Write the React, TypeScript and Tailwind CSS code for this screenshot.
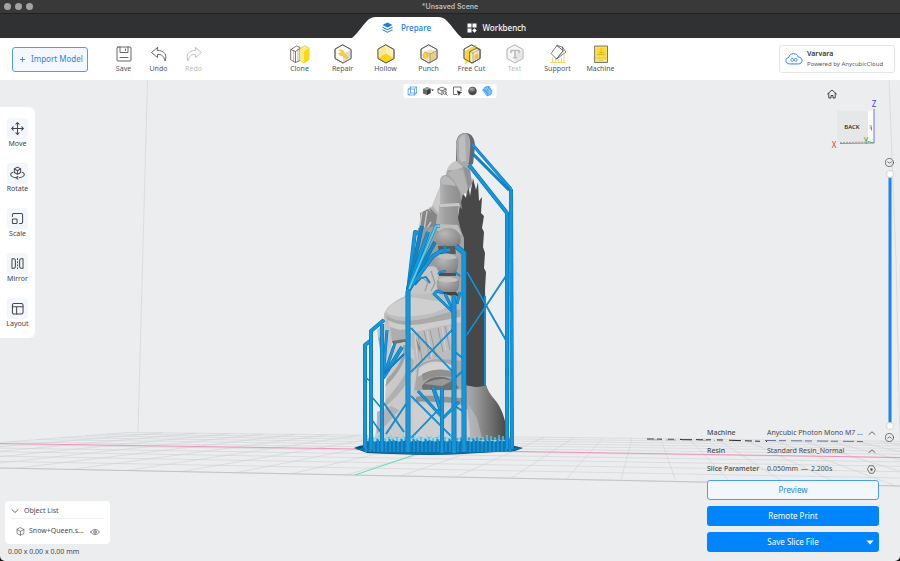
import { useState, type ReactNode } from "react";

type Point = [number, number];

const HEX = "M10 1 18 5.5v9L10 19l-8-4.5v-9z";

function Icon({ children, className = "size-5", box = 20 }: { children: ReactNode; className?: string; box?: number }) {
  return (
    <svg
      viewBox={`0 0 ${box} ${box}`}
      className={className}
      fill="none"
      stroke="currentColor"
      strokeLinecap="round"
      strokeLinejoin="round"
      aria-hidden="true"
    >
      {children}
    </svg>
  );
}

/* ---------- Toolbar ---------- */

const fileTools = [
  {
    label: "Save",
    icon: (
      <g strokeWidth="0.9">
        <rect x="3" y="3" width="14" height="14" rx="1" />
        <path d="M6 3v5.5h8V3M11.5 5v1.5M6 13.5h8" />
      </g>
    ),
  },
  {
    label: "Undo",
    icon: <path strokeWidth="0.9" d="M8.500 3.500 2.500 8.500l6 5v-3c4-.5 6.500 1.500 7.500 6.500 2.500-6-.5-10.500-7.500-10.700z" />,
  },
  {
    label: "Redo",
    disabled: true,
    icon: <path strokeWidth="0.9" d="m11.500 3.500 6 5-6 5v-3c-4-.5-6.500 1.500-7.500 6.500-2.500-6 .5-10.500 7.500-10.700z" />,
  },
];

const modelTools = [
  {
    label: "Clone",
    icon: (
      <g strokeWidth="0.8">
        <path d="M1 5.500 6.500 2l3.500 1.500v13L5.500 18.500 1 16zM1 5.500l4.500 2v11M5.500 7.500 10 4.500" fill="#fff" />
        <path d="M8 4.500v12M3.500 7v10" strokeWidth="0.4" />
        <path d="m10 5 4.500-3.500L19 4v11.500L14 19l-4-2.500z" fill="#fdeb8a" stroke="#e8c92e" />
        <path d="M14 7.500 19 4v11.500L14 19z" fill="#fbd815" stroke="none" />
      </g>
    ),
  },
  {
    label: "Repair",
    icon: (
      <g strokeWidth="0.8">
        <path d={HEX} fill="#fafafa" />
        <path d="M10 10 18 5.500v9L10 19z" fill="#dedede" stroke="none" />
        <path d={HEX} />
        <path
          d="M6.500 6.200 8.500 8 8 9.500l-2.200-.4c.2 2.200 2 3.200 3.700 2.400l3.400 3c1.500.6 2.500-.8 1.800-2l-3.500-3C11.500 7.300 9 5 6.500 6.200z"
          fill="#fbd529"
          stroke="#d9b220"
          strokeWidth="0.5"
        />
      </g>
    ),
  },
  {
    label: "Hollow",
    icon: (
      <g strokeWidth="0.8">
        <path d={HEX} fill="#fdf0b0" />
        <path d="M10 1v9l-8 4.500v-9z" fill="#fbe88f" stroke="none" />
        <path d="m10 10 7 4.200-7 4-7-4z" fill="#fbd40f" stroke="#e8c010" strokeWidth="0.4" />
        <path d={HEX} />
      </g>
    ),
  },
  {
    label: "Punch",
    icon: (
      <g strokeWidth="0.8">
        <path d={HEX} fill="#fff" />
        <path d="M5 8 11.500 5l6 2v8L11 18.500 5 15z" fill="#f6e3b4" stroke="none" />
        <path d="m11 10 6.500-3v7.500l-6.500 4z" fill="#e9cc90" stroke="none" />
        <path d={HEX} />
        <path d="m5 8 6 2v8.500M11 10l6.500-3" strokeWidth="0.4" />
        <circle cx="6.500" cy="11.500" r="2.700" fill="#fbd529" stroke="#d9b220" strokeWidth="0.5" />
      </g>
    ),
  },
  {
    label: "Free Cut",
    icon: (
      <g strokeWidth="0.8">
        <path d={HEX} fill="#fff" />
        <path d="M3.500 7 14 1v12.500l-10.500 6z" fill="#fbd529" stroke="#e8c92e" strokeWidth="0.5" />
        <path d="m8 7.500 6-3 4 1v9L10 19l-2-1z" fill="#fbeab0" />
        <path d="m8 7.500 3 1.500v9.500M11 9l7-3.500" strokeWidth="0.4" />
        <path d="M12.500 11 16.500 9v5l-4 2.200z" fill="#e2c268" stroke="none" />
        <path d={HEX} />
      </g>
    ),
  },
  {
    label: "Text",
    disabled: true,
    icon: (
      <g strokeWidth="0.8">
        <path d={HEX} fill="#f7f7f7" />
        <path d="M10 10 18 5.500v9L10 19z" fill="#e6e6e6" stroke="none" />
        <path d="M6 8.500v-2h8v2M10 6.500v7M8.700 13.800h2.600" strokeWidth="1.600" />
        <path d={HEX} />
      </g>
    ),
  },
  {
    label: "Support",
    icon: (
      <g strokeWidth="0.8">
        <path
          d="M4.500 14v4M7.500 15v3M10.500 15.500V18M13.500 14v4M16 11v7M3 18.500h14"
          stroke="#f3c93c"
          strokeDasharray="1.500 .7"
        />
        <path d="M9 1.500 3 9.500l5.500 5.500L15 7z" fill="#fff" />
        <path d="m9 1.500 5.500 1.700L18 8l-9.500 7L15 7zM15 7l-.5-3.800" fill="#fff" />
      </g>
    ),
  },
  {
    label: "Machine",
    icon: (
      <g strokeWidth="0.8">
        <rect x="4" y="2" width="12.500" height="16.500" fill="#fbe46c" />
        <path d="M5.500 3.500h9.500v9H5.500z" fill="#fbd932" stroke="none" />
        <path
          d="M10.200 4.500v6M6.500 10.500h7.500M8.500 8.500h3.500M4 14h12.500M8.500 16.300h3.500"
          stroke="#c09c22"
          strokeWidth="0.5"
        />
      </g>
    ),
  },
];

interface ToolButtonProps {
  label: string;
  icon: ReactNode;
  disabled?: boolean;
  className: string;
}

function ToolButton({ label, icon, disabled, className }: ToolButtonProps) {
  return (
    <button
      type="button"
      disabled={disabled}
      className={`flex flex-col items-center text-[7px] leading-[10px] text-[#555] disabled:text-[#bbb] ${className}`}
    >
      <Icon>{icon}</Icon>
      <span className="whitespace-nowrap">{label}</span>
    </button>
  );
}

function Toolbar() {
  return (
    <header className="relative grid h-[42px] shrink-0 grid-cols-[1fr_auto_1fr] items-center bg-white px-3">
      <div className="flex items-center">
        <button
          type="button"
          className="flex h-[25px] w-[76px] items-center gap-[5px] rounded-[3px] border border-[#4a9df5] bg-[#f4f8fe] pl-[6px] text-[8px] whitespace-nowrap text-[#2a83e6]"
        >
          <Icon box={8} className="size-[7px] shrink-0">
            <path d="M4 1.500v5M1.500 4h5" />
          </Icon>
          Import Model
        </button>
        <div className="ml-[18px] flex">
          {fileTools.map((tool) => (
            <ToolButton key={tool.label} {...tool} className="w-[35px]" />
          ))}
        </div>
      </div>

      <div className="flex">
        {modelTools.map((tool) => (
          <ToolButton key={tool.label} {...tool} className="w-[43px]" />
        ))}
      </div>

      <a
        href="#account"
        className="-mr-[7px] flex h-7 w-[116px] items-center gap-1 justify-self-end rounded-[3px] border border-[#e4e5e8] bg-white pl-[5px]"
      >
        <Icon className="size-[18px] shrink-0 text-[#2b87f3]">
          <path
            d="M5.500 15.500C2.500 15.500 1 13.800 1 11.800 1 9.900 2.400 8.500 4.200 8.300 4.600 5.500 6.800 4 9.500 4c2.600 0 4.600 1.500 5.200 3.800 2.500.1 4.300 1.600 4.300 3.900 0 2.200-1.700 3.800-4.200 3.800z"
            strokeWidth="1.100"
          />
          <path
            d="M8 9.200c-2 0-2 3.600 0 3.600s2-3.600 4-3.600 2 3.600 0 3.600-2-3.600-4-3.600z"
            strokeWidth="0.9"
          />
        </Icon>
        <span className="flex flex-col leading-[10px] whitespace-nowrap text-[#555]">
          <strong className="text-[7px] font-semibold text-[#333]">Varvara</strong>
          <span className="text-[6px]">Powered by AnycubicCloud</span>
        </span>
      </a>
    </header>
  );
}

/* ---------- Tabs ---------- */

function Tabs() {
  return (
    <nav className="flex h-[25px] shrink-0 items-stretch justify-center border-t border-[#222] bg-[#303133] text-[8px] font-medium">
      <button type="button" className="relative flex w-[110px] items-center justify-center gap-2 text-[#1b7be8]">
        <svg viewBox="0 0 110 24" preserveAspectRatio="none" className="absolute inset-0 size-full" aria-hidden="true">
          <path d="M0 24C6 19 10 12 15 7c3-3 5-4 9-4h62c4 0 6 1 9 4 5 5 9 12 15 17z" fill="#fff" />
        </svg>
        <svg viewBox="0 0 12 12" className="relative mt-[3px] size-[11px]" fill="currentColor" aria-hidden="true">
          <path d="m6 .5 5.500 2.700L6 6 .5 3.200z" />
          <path d="m.5 5 5.500 2.800L11.500 5v1.300L6 9 .5 6.300zM.5 7.800 6 10.500l5.500-2.700V9L6 11.800.5 9z" />
        </svg>
        <span className="relative mt-[3px]">Prepare</span>
      </button>
      <button type="button" className="flex w-[87px] items-center gap-[6px] pt-[3px] pl-[5px] text-white">
        <svg viewBox="0 0 10 10" className="size-[10px]" fill="currentColor" aria-hidden="true">
          <path d="M.5.500h4v4h-4zM5.500.500h4v4h-4zM.5 5.500h4v4h-4zM7.500 5.200 9.800 7.500 7.500 9.800 5.200 7.500z" />
        </svg>
        Workbench
      </button>
    </nav>
  );
}

/* ---------- Build plate ---------- */

// All depth lines of the plate meet in this point.
const VANISH: Point = [644, 392];

function crossing(frontX: number, base: number, slope: number): Point {
  const frontY = 468 + 0.02 * frontX;
  const dx = frontX - VANISH[0];
  const dy = frontY - VANISH[1];
  const t = (base + slope * VANISH[0] - VANISH[1]) / (dy - slope * dx);
  return [VANISH[0] + dx * t, VANISH[1] + dy * t];
}

function BuildPlate() {
  const depth = Array.from({ length: 34 }, (_, i) => -259 + i * 55);
  const rows = [0, 0.05, 0.1, 0.16, 0.22, 0.29, 0.37, 0.46, 0.56, 0.68, 0.82, 1];

  return (
    <g fill="none">
      <path d="M147.500 80 138 432M889 80l7 180 4 180" stroke="#d6d8da" strokeWidth="0.8" />
      <g stroke="#cfd1d3" strokeWidth="0.6">
        {depth.map((x) => {
          const [bx, by] = crossing(x, 431, 0.0115);
          return <line key={x} x1={bx} y1={by} x2={x} y2={468 + 0.02 * x} />;
        })}
        {rows.map((r) => {
          const base = 431 + 37 * r;
          const slope = 0.0115 + 0.0085 * r;
          const [x, y] = crossing(-259, base, slope);
          return <line key={r} x1={x} y1={y} x2="1400" y2={base + slope * 1400} />;
        })}
      </g>
      <path d="M-200 464 900 486l500 10" stroke="#bfc1c3" strokeWidth="0.9" />
      <path d="M-200 440 0 443.500l360 5.500 540 8.500 500 8" stroke="#f07fb0" strokeWidth="0.8" />
      <path d="m355 475 62-21" stroke="#54dcae" strokeWidth="0.9" />
      <path d="m647 439 75 1 45 1.500" stroke="#2c2d30" strokeWidth="1" strokeDasharray="7 3 5 6 6 6 12 4" />
      <path d="m650 439.700 65 .8" stroke="#9a9b9e" strokeWidth="0.8" strokeDasharray="10 6" />
      <path d="m765 440.500 98 1" stroke="#53648a" strokeWidth="0.9" strokeDasharray="11 3 7 5" />
    </g>
  );
}

/* ---------- Sliced model ---------- */

function Figure() {
  return (
    <g>
      <defs>
        <linearGradient id="cape" x1="0" y1="0" x2="1" y2="0">
          <stop offset="0" stopColor="#c4c4c4" />
          <stop offset="0.4" stopColor="#a0a0a0" />
          <stop offset="0.75" stopColor="#6c6c6c" />
          <stop offset="1" stopColor="#454545" />
        </linearGradient>
        <linearGradient id="cloth" x1="0" y1="0" x2="1" y2="0.2">
          <stop offset="0" stopColor="#d3d3d3" />
          <stop offset="0.6" stopColor="#c2c2c2" />
          <stop offset="1" stopColor="#a2a2a2" />
        </linearGradient>
        <linearGradient id="arm" x1="0" y1="0" x2="1" y2="0">
          <stop offset="0" stopColor="#b4b4b4" />
          <stop offset="0.3" stopColor="#a0a0a0" />
          <stop offset="1" stopColor="#8b8b8b" />
        </linearGradient>
        <radialGradient id="fist" cx="0.35" cy="0.3" r="0.8">
          <stop offset="0" stopColor="#b8b8b8" />
          <stop offset="1" stopColor="#808080" />
        </radialGradient>
      </defs>

      {/* hair and cape seen edge on */}
      <path
        d="M462 192 466 198 468 184 470 196 473 178 476 190 478 182 479 201 482 197 481 213 484 216 482 228 484 232 483 247 485 253 484 268 486 272 485 290 486 320 486 385 490 400H455V235z"
        fill="#484848"
      />
      <path d="M463 384C472 387 480 386 486 385 489 394 494 398 498 404 503 412 505 420 507 430L507 440H450z" fill="url(#cape)" />
      <path d="M464 340h22v45c-7 3-14 2-20 0z" fill="#484848" />

      {/* ring */}
      <path d="M456 146c0-8 3-13 9-13 7 0 10 6 10 14l-2 17-12 5-5-6z" fill="#686868" />
      <path d="M456 146c0-8 3-12 9-13 5 1 6 8 5 17l-1 13-6 3-6-3z" fill="#a9a9a9" />
      <path d="M459 140c1-3 3-5 6-5l1 26-5 1-2-4z" fill="#bebebe" />

      {/* head and shoulder */}
      <path d="M446 175c1-8 6-13 11-14l12 3 3 18-2 8-2-6-1 12-3-6-3 12-9-12-7-10z" fill="#a8a8a8" />
      <path d="M447 170c2-5 5-8 9-9l7 6-7 3z" fill="#c6c6c6" />
      <path d="m456 169 7 2 5 19-5 5-9-14-6-8z" fill="#b4b4b4" />
      <path d="m463 166 7 4 2 14-4 4z" fill="#939393" />

      {/* torso */}
      <path
        d="m441 184-9 22-6 5-6 12-4 20-6 40-6 14c-10 4-17 12-20 17l4 12 5 16 5 28-10 38-10 22-3 8H464V238l-18-45z"
        fill="url(#cloth)"
      />
      <path d="m440 187-8 20 8 9 3-20z" fill="#cbcbcb" />
      <path d="m429 211 4-5 7 10 1 10-12 2-6 2z" fill="#b1b1b1" />
      <path d="m420 213 8-4 3 4-2-6 8 8-1 9 5 5-20 2z" fill="#858585" />
      <path d="m422 212-3 18M427 211l-3 19M431 222l-6 9" stroke="#c9c9c9" strokeWidth="1.400" fill="none" />
      <path d="M418 228 440 226 438 270 412 290z" fill="#9b9b9b" />
      <path d="M410 284c10-18 20-20 28-16v24l-26 6z" fill="#c6c6c6" />
      <path d="m420 276 8 6-3 9M431 271l4 12-4 8" stroke="#9c9c9c" strokeWidth="1.200" fill="none" />

      {/* arm */}
      <path d="M440 181c0-4 3-6 6-6 7 3 11 11 14 18l2 16-3-3-19-2z" fill="url(#arm)" />
      <path d="M441 181c1-3 2-5 5-5 5 2 8 6 10 10l-15-2z" fill="#b9b9b9" />
      <path d="m439 204 20-1-1 15 4 17-9-5-15-4z" fill="url(#arm)" />
      <path d="m439 204 20-1 1 3-20 1z" fill="#c8c8c8" />
      <path d="m438 224 20 1 4 10-8-3-17-1z" fill="#bdbdbd" />
      <path d="M436 236c2-10 20-11 24-1 2 6 0 12-5 12h-13c-4-1-7-5-6-11z" fill="url(#fist)" />
      <path d="M438 246h17l1 8h-17z" fill="#5a5a5a" />
      <path d="M435 259c1-7 20-8 23 0 1 8-1 15-5 15l-12-1c-4-2-6-7-6-14z" fill="url(#fist)" />
      <path d="M437 257c4-4 16-5 20 1-4 2-14 2-20-1z" fill="#bfbfbf" />
      <path d="M439 273h17v3h-17z" fill="#505050" />
      <path d="M437 281c2-6 19-6 22 0 1 6-2 12-6 12h-11c-4-1-6-6-5-12z" fill="url(#fist)" />
      <path d="M438 280c3-4 17-4 20 0-3 3-16 3-20 0z" fill="#c4c4c4" />
      <path d="M441 292h15l4 4h-19z" fill="#444" />

      {/* lap and knee */}
      <path d="M384 315c2-9 13-16 24-20l32-2 21 5v27l-40 10-14 6-15 2c-2-10-9-18-8-28z" fill="#bebebe" />
      <path d="M386 312c4-8 13-13 24-15l20 3 25 4-22 9c-18 4-40 6-47-1z" fill="#cfcfcf" />
      <path d="M386 315c10 9 30 6 46 2l28-8v8l-26 6c-22 5-38 6-46 0z" fill="#a9a9a9" />
      <path d="M388 320c10 6 26 6 40 3l33-6v10l-34 7-20 3-4 4h-11z" fill="#cdcdcd" />
      <path d="m390 327 10 3 6-1-1 10-13 3z" fill="#aeaeae" />
      <path d="m392 341 13-2 1 3-13 2z" fill="#6f6f6f" />
      <path d="M408 334 428 329 461 322V374l-48-2z" fill="#bcbcbc" />
      <path
        d="m418 334 4 26M424 331l6 28M430 330l6 27M438 328l5 24M445 326l5 24M452 325l4 22"
        stroke="#9d9d9d"
        strokeWidth="1"
        fill="none"
      />
      <path d="m415 335 3 30M427 331l5 27M442 327l4 24M449 326l4 23" stroke="#d2d2d2" strokeWidth="1" fill="none" />
      <path d="M377 330 386 322 392 343 388 370 384 378z" fill="#c4c4c4" />
      <path d="m378 336 6 36 2-26z" fill="#9a9a9a" />

      {/* skirt folds */}
      <path d="M388 348 404 342 414 350 416 376 412 402 384 420z" fill="#c9c9c9" />
      <path d="M403 345c2 10-4 22-16 34l-2 8c12-12 22-26 22-42z" fill="#a2a2a2" />
      <path d="M410 356c0 14-10 28-24 44l-1 7c16-14 28-28 29-46z" fill="#b0b0b0" />
      <path d="M416 338 420 348 415 374 419 352z" fill="#7d7d7d" />
      <path d="M418 366c10-8 24-8 44-5v28l-48 4z" fill="#a6a6a6" />
      <path d="M419 368c12-10 26-7 36-1l-1 4c-12-3-24-2-36 6z" fill="#d2d2d2" />
      <path d="M422 374c12-6 22-5 33-1l-4 4c-10-2-18-1-28 4z" fill="#909090" />
      <path d="M422 386c6-10 20-12 30-6l7 8-14 3-22 1z" fill="#707070" />
      <path d="M424 384c8-4 18-7 28-3l-10 5z" fill="#999" />
      <path d="M412 391c15-3 34 1 52-2l2 12-50-1z" fill="#c4c4c4" />
      <path d="M416 397c8-3 30 0 46 1l2 5c-16 0-34-2-48-1z" fill="#939393" />
      <path d="M378 412c14-8 40-12 60-10 18 1 24 2 30 8l2 28H375z" fill="#cacaca" />
      <path d="M412 404c16 0 38 2 54 8 4 8 4 18 4 26h-56z" fill="#cfcfcf" />
      <path d="m377 412 14-6 8 4-10 12-12 12z" fill="#b2b2b2" />
      <path d="m468 404 9 14 5 20h-12z" fill="#c6c6c6" opacity="0.5" />
    </g>
  );
}

interface Strut {
  points: string;
  width: number;
  tone?: "cyan" | "deep";
}

const braces: Strut[] = [
  { points: "485,296 485,385", width: 2 },
  { points: "467,272 507,342", width: 1.7 },
  { points: "508,273 466,336", width: 1.7 },
  { points: "411,328 453,372", width: 1.7 },
  { points: "411,372 453,329", width: 1.7 },
  { points: "411,396 453,438", width: 1.7 },
  { points: "411,438 441,407", width: 1.7 },
  { points: "383,402 404,432", width: 1.7 },
  { points: "406,404 386,434", width: 1.7 },
  { points: "372,397 382,409", width: 1.4 },
  { points: "372,420 382,434", width: 1.4 },
  { points: "364,376 371,382", width: 1.4 },
  { points: "455,352 464,359", width: 1.7 },
  { points: "455,378 464,370", width: 1.7 },
  { points: "455,406 464,412", width: 1.7 },
];

const struts: Strut[] = [
  // fan under the elbow
  { points: "408,292 415,232 418,233", width: 4 },
  { points: "408,290 422,226", width: 4, tone: "deep" },
  { points: "408,290 428,232", width: 4 },
  { points: "409,290 435,242", width: 4, tone: "deep" },
  { points: "409,289 433,256 441,251 450,250", width: 4 },
  { points: "409,289 436,226 440,226", width: 3, tone: "cyan" },
  { points: "415,285 421,278 426,277 430,283", width: 1.6, tone: "deep" },
  // wrist
  { points: "438,274 440,272 446,271", width: 2 },
  { points: "445,253 445,245", width: 2 },
  { points: "455,272 460,276", width: 2 },
  { points: "454,313 434,294 437,291 443,293", width: 3 },
  { points: "452,308 445,294", width: 3 },
  { points: "457,304 460,292", width: 3 },
  // ring
  { points: "472,153 509,190", width: 3, tone: "deep" },
  { points: "472,144 511,189", width: 3 },
  { points: "469,165 507,213 507,449", width: 4 },
  { points: "511,189 512,449", width: 4 },
  // left tree
  { points: "383,378 387,330", width: 3 },
  { points: "383,378 395,343", width: 3 },
  { points: "383,378 402,347", width: 4 },
  { points: "384,374 404,354", width: 2, tone: "deep" },
  // columns
  { points: "365,448 365,345 370,341", width: 4 },
  { points: "371,450 371,331 384,320", width: 4 },
  { points: "382,451 382,324", width: 4 },
  { points: "464,452 464,253 456,246", width: 5 },
  { points: "454,453 454,295", width: 5 },
  { points: "408,452 408,291", width: 5 },
  // centre tree
  { points: "442,417 418,391", width: 3 },
  { points: "441,411 433,387", width: 4 },
  { points: "443,418 459,402", width: 3 },
  { points: "442,453 442,388", width: 4 },
];

function Tube({ points, width, tone }: Strut) {
  const fill = tone === "cyan" ? "#4ccdf0" : tone === "deep" ? "#1285c6" : "#1597dd";
  return (
    <g fill="none" strokeLinejoin="round">
      <polyline points={points} stroke="#0c74af" strokeWidth={width} />
      <polyline points={points} stroke={fill} strokeWidth={width * 0.7} />
    </g>
  );
}

function Raft() {
  const pins = Array.from({ length: 37 }, (_, i) => 366 + i * 4);
  return (
    <g>
      <path d="M354 448c4-2 8-3 12-3h145l12 3-8 3-62 3.500c-25 1-55 0-86-1.500z" fill="#0a4f7c" />
      <path d="m356 449 12 3c30 2 60 3 85 2l62-3.500 7-2.500-15-1H368z" fill="#0f6faa" />
      <path d="M365 441h148v10l-60 2.500-88-2z" fill="#0c6ca6" />
      {pins.map((x, i) => (
        <g key={x}>
          <path d={`M${x} ${439 + (i % 3)}V452`} stroke="#1490d2" strokeWidth="2.600" />
          <path d={`M${x + 1} ${435 + (i % 3)}v5`} stroke="#6fd6e6" strokeWidth="1.200" />
          <path d={`M${x - 1} ${437 + (i % 2)}v4`} stroke="#1490d2" strokeWidth="1" />
        </g>
      ))}
    </g>
  );
}

function Scene() {
  return (
    <svg
      viewBox="0 80 900 481"
      preserveAspectRatio="xMidYMid slice"
      className="absolute inset-0 size-full"
      role="img"
      aria-label="Model on the build plate"
    >
      <BuildPlate />
      <Figure />
      {braces.map((s) => (
        <Tube key={s.points} {...s} />
      ))}
      <Raft />
      {struts.map((s) => (
        <Tube key={s.points} {...s} />
      ))}
    </svg>
  );
}

/* ---------- Panels over the viewport ---------- */

const transforms = [
  {
    label: "Move",
    icon: <path d="M10 3v14M3 10h14M8 5l2-2 2 2M8 15l2 2 2-2M5 8l-2 2 2 2M15 8l2 2-2 2" />,
  },
  {
    label: "Rotate",
    icon: (
      <>
        <path d="m10 2.500 3.700 2v4.300L10 11 6.300 8.800V4.500zM6.300 4.500 10 6.700l3.700-2.200M10 6.700V11" />
        <path d="M4.500 8.500C.5 10 1 14 8 15M15.500 8.500c4 1.500 3.500 5.500-3.500 6.500M10.500 13.500 8.500 15l2 1.700" />
      </>
    ),
  },
  {
    label: "Scale",
    icon: (
      <>
        <path d="M4 7.500V5.500C4 4.500 4.500 4 5.500 4h9c1 0 1.500.5 1.500 1.500v9c0 1-.5 1.500-1.500 1.500h-2" />
        <rect x="4" y="10.500" width="5.500" height="5.500" rx="1" />
      </>
    ),
  },
  {
    label: "Mirror",
    icon: (
      <path d="M3.500 4.500h2c1.500 0 2 1 2 2v7c0 1-.5 2-2 2h-2zM16.500 4.500h-2c-1.500 0-2 1-2 2v7c0 1 .5 2 2 2h2zM10 4v1.500M10 8v1M10 11.500v1M10 15v1" />
    ),
  },
  {
    label: "Layout",
    icon: (
      <>
        <rect x="4" y="4" width="12.500" height="12.500" rx="2" />
        <path d="M4 8h12.500M9 8v8.500" />
      </>
    ),
  },
];

function TransformBar() {
  return (
    <aside className="absolute top-[27px] left-0 flex w-[35px] flex-col items-center gap-[14px] rounded-r-md bg-white pt-[11px] pb-[9px]">
      {transforms.map((item) => (
        <button
          key={item.label}
          type="button"
          className="flex flex-col items-center text-[7px] leading-[10px] text-[#444]"
        >
          <span className="flex size-[21px] items-center justify-center rounded-[3px] bg-[#f3f7fd]">
            <Icon className="size-[17px]">
              <g strokeWidth="1.200">{item.icon}</g>
            </Icon>
          </span>
          {item.label}
        </button>
      ))}
    </aside>
  );
}

const viewModes = [
  {
    label: "Perspective",
    icon: (
      <g stroke="#2b87f3" strokeWidth="1.300">
        <path d="M2 6h12v12H2zM2 6l4-4h12v12l-4 4M14 6l4-4M6 2v12h12M6 14l-4 4" />
      </g>
    ),
  },
  {
    label: "View direction",
    icon: (
      <g stroke="none">
        <path d="M1 6 9 2l7 3v9l-7 4-8-3z" fill="#666" />
        <path d="m1 6 8-4 7 3-7 4z" fill="#9a9a9a" />
        <path d="M9 9v9l7-4V5z" fill="#3a3a3a" />
        <path d="M17 7h6l-3 3z" fill="#222" />
      </g>
    ),
  },
  {
    label: "Fit view",
    icon: (
      <g stroke="#444" strokeWidth="1.500">
        <path d="M9 17 1 13.500V6l8-4 8 4v3M1 6l8 4 8-4M9 10v7" />
        <circle cx="14.500" cy="13.500" r="3" />
        <path d="m17 16 2.500 2.500" />
      </g>
    ),
  },
  {
    label: "Box select",
    icon: (
      <g stroke="#444" strokeWidth="1.500">
        <path d="M9 17H2V2h15v7" />
        <path d="m10 10 8 3-3.500 1.500L13 18z" fill="#111" />
      </g>
    ),
  },
  {
    label: "Shading",
    icon: (
      <g stroke="none">
        <circle cx="10" cy="10" r="8.500" fill="#4c4c4c" />
        <ellipse cx="9" cy="7" rx="6" ry="4.500" fill="#7d7d7d" />
        <ellipse cx="8.500" cy="6" rx="3.500" ry="2.300" fill="#a2a2a2" />
      </g>
    ),
  },
  {
    label: "Transparency",
    icon: (
      <g>
        <path d="M1 8 5 2l8-1 6 9-2 7-7 2.500z" fill="#62b4f7" stroke="#2a8be4" strokeWidth="1.300" />
        <path d="m1 8 8 2 4-9M9 10l1 9.500" stroke="#2a8be4" strokeWidth="1" />
        <path d="m5 4 10 12M9 3l8 10" stroke="#cfe8fd" strokeWidth="1" />
      </g>
    ),
  },
];

function ViewModes() {
  return (
    <div className="absolute top-1 left-1/2 flex h-[14px] -translate-x-1/2 items-center gap-[5px] rounded-xs bg-white px-1">
      {viewModes.map((mode) => (
        <button key={mode.label} type="button" aria-label={mode.label}>
          <Icon className="size-[10px] overflow-visible">{mode.icon}</Icon>
        </button>
      ))}
    </div>
  );
}

function ViewCube() {
  return (
    <div className="absolute top-2 right-4 flex w-[58px] flex-col">
      <button type="button" aria-label="Home view" className="self-start text-[#333]">
        <Icon box={12} className="size-3">
          <path d="M1.500 6 6 2l4.500 4M2.800 5.500V10H5V7.500h2V10h2.200V5.500" strokeWidth="0.900" />
        </Icon>
      </button>
      <svg viewBox="-4 -4 58 58" className="-mt-1 w-full font-['Noto_Sans',sans-serif]" aria-label="View cube">
        <path d="M7 11h31v31H7z" fill="#e6e7e8" />
        <path d="m38 11 6-1v32l-6 1z" fill="#fcfcfc" />
        <path d="M44 9v34" stroke="#7074e6" strokeWidth="1" />
        <path d="m10 43.500 34-.5" stroke="#ee6b78" strokeWidth="1" />
        <path d="m10 42.500 31-.5" stroke="#8b8f8c" strokeWidth="0.700" strokeDasharray="2 1" />
        <path d="m38 41.500 6 1.500" stroke="#45c15c" strokeWidth="0.900" />
        <text x="22" y="29" fontSize="6" fontWeight="500" textAnchor="middle" fill="#222">BACK</text>
        <path d="M39.500 26h2.500M39.500 28h2v2.500M41.500 28v-1" stroke="#666" strokeWidth="0.700" fill="none" />
        <text x="44" y="7" fontSize="8" textAnchor="middle" fill="#4343d8">Z</text>
        <text x="4" y="48" fontSize="8" textAnchor="middle" fill="#e0303f">X</text>
        <text x="36" y="44" fontSize="8" textAnchor="middle" fill="#1fae3b">Y</text>
      </svg>
    </div>
  );
}

const thumbClass =
  "pointer-events-none absolute inset-0 m-0 size-full appearance-none bg-transparent [direction:rtl] [writing-mode:vertical-lr] [&::-webkit-slider-thumb]:pointer-events-auto [&::-webkit-slider-thumb]:size-2 [&::-webkit-slider-thumb]:appearance-none [&::-webkit-slider-thumb]:rounded-full [&::-webkit-slider-thumb]:border [&::-webkit-slider-thumb]:border-[#d3d4d8] [&::-webkit-slider-thumb]:bg-white";

function LayerSlider() {
  const [top, setTop] = useState(100);
  const [bottom, setBottom] = useState(0);

  return (
    <div className="absolute top-[78px] right-[6px] bottom-[119px] flex w-[9px] flex-col items-center gap-[3px] text-[#444]">
      <button type="button" aria-label="Layer up">
        <Icon box={10} className="size-[9px]">
          <circle cx="5" cy="5" r="4.500" strokeWidth="0.800" />
          <path d="m3 4.300 2 1.500 2-1.500" strokeWidth="0.800" />
        </Icon>
      </button>
      <div className="relative w-2 flex-1">
        <div className="absolute inset-y-1 left-1/2 w-[3px] -translate-x-1/2 rounded-full bg-[#1b82f1]" />
        <input
          type="range"
          aria-label="Top layer"
          value={top}
          onChange={(e) => setTop(Math.max(Number(e.target.value), bottom))}
          className={thumbClass}
        />
        <input
          type="range"
          aria-label="Bottom layer"
          value={bottom}
          onChange={(e) => setBottom(Math.min(Number(e.target.value), top))}
          className={thumbClass}
        />
      </div>
      <button type="button" aria-label="Layer down">
        <Icon box={10} className="size-[9px]">
          <circle cx="5" cy="5" r="4.500" strokeWidth="0.800" />
          <path d="m3 5.700 2-1.500 2 1.500" strokeWidth="0.800" />
        </Icon>
      </button>
    </div>
  );
}

const profiles = [
  { id: "machine", label: "Machine", value: "Anycubic Photon Mono M7 ..." },
  { id: "resin", label: "Resin", value: "Standard Resin_Normal" },
];

function SlicePanel() {
  return (
    <section className="absolute right-[21px] bottom-[9px] w-[172px] text-[7px] text-[#4a4a4a]">
      {profiles.map((p) => (
        <div key={p.id} className="flex h-[18px] items-center">
          <label htmlFor={p.id} className="w-[60px] shrink-0 font-medium">
            {p.label}
          </label>
          <select id={p.id} className="-mr-2 min-w-0 flex-1 appearance-none bg-transparent pr-2">
            <option>{p.value}</option>
          </select>
          <Icon box={8} className="pointer-events-none mr-[3px] size-2">
            <path d="M1 5.500 4 2.800l3 2.700" strokeWidth="0.800" />
          </Icon>
        </div>
      ))}
      <div className="flex h-[18px] items-center">
        <span className="w-[60px] shrink-0 font-medium whitespace-nowrap">Slice Parameter</span>
        <span className="flex flex-1 gap-[3px]">
          <span>0.050mm</span>
          <span>—</span>
          <span>2.200s</span>
        </span>
        <button type="button" aria-label="Edit slice parameters" className="mr-[3px]">
          <Icon box={10} className="size-[9px]">
            <path d="M3 .8h4L9.300 5 7 9.200H3L.7 5z" strokeWidth="0.800" />
            <circle cx="5" cy="5" r="1.300" fill="currentColor" stroke="none" />
          </Icon>
        </button>
      </div>

      <div className="mt-[2px] flex flex-col gap-[6px] text-[8px]">
        <button type="button" className="h-5 rounded-[3px] border border-[#4a9df5] bg-[#f2f7fe] text-[#2a83e6]">
          Preview
        </button>
        <button type="button" className="h-5 rounded-[3px] bg-[#0085ff] text-white">
          Remote Print
        </button>
        <button type="button" className="relative h-5 rounded-[3px] bg-[#0085ff] text-white">
          Save Slice File
          <svg
            viewBox="0 0 8 5"
            className="absolute top-2 right-[5px] h-[5px] w-2"
            fill="currentColor"
            aria-hidden="true"
          >
            <path d="M.5.500h7L4 4.500z" />
          </svg>
        </button>
      </div>
    </section>
  );
}

function ObjectList() {
  return (
    <div className="absolute bottom-1 left-[5px] text-[7px] text-[#4a4a4a]">
      <section className="w-[105px] rounded-sm bg-white px-[6px] pb-[3px]">
        <button type="button" className="flex h-[18px] w-full items-center gap-[5px] border-b border-[#f0f0f2] pt-[3px]">
          <Icon box={8} className="size-2">
            <path d="m1 2.800 3 2.700 3-2.700" strokeWidth="0.800" />
          </Icon>
          Object List
        </button>
        <div className="flex h-[22px] items-center gap-1 pt-[3px] pl-[5px]">
          <Icon box={10} className="size-[9px]">
            <path
              d="m5 .8 3.800 2v4.400L5 9.200 1.200 7.200V2.800zM1.200 2.800 5 4.800l3.800-2M5 4.800v4.400"
              strokeWidth="0.700"
            />
          </Icon>
          <span className="w-[57px] whitespace-nowrap">Snow+Queen.s...</span>
          <button type="button" aria-label="Toggle visibility">
            <Icon box={10} className="size-[10px]">
              <path d="M.6 5C2.500 1.700 7.500 1.700 9.400 5 7.500 8.300 2.500 8.300.6 5z" strokeWidth="0.700" />
              <circle cx="5" cy="5" r="1.300" strokeWidth="0.700" />
            </Icon>
          </button>
        </div>
      </section>
      <p className="mt-[3px] pl-[3px] leading-[10px]">0.00 x 0.00 x 0.00 mm</p>
    </div>
  );
}

export default function App() {
  return (
    <div className="h-screen bg-[#15110e] font-['Noto_Sans',sans-serif]">
      <div className="flex h-full flex-col overflow-hidden rounded-b-[5px] bg-[#ecedef]">
        <div className="relative flex h-[13px] shrink-0 items-center justify-center bg-[#393939]">
          <div className="absolute inset-y-0 left-1 flex items-center gap-1">
            <span className="size-[7px] rounded-full bg-[#a3a3a3]" />
            <span className="size-[7px] rounded-full bg-[#a3a3a3]" />
            <span className="size-[7px] rounded-full bg-[#a3a3a3]" />
          </div>
          <h1 className="font-['Inter',sans-serif] text-[7px] leading-none font-semibold text-[#bdbdbd]">
            *Unsaved Scene
          </h1>
        </div>
        <Tabs />
        <Toolbar />
        <main className="relative min-h-0 flex-1 overflow-hidden">
          <Scene />
          <TransformBar />
          <ViewModes />
          <ViewCube />
          <LayerSlider />
          <SlicePanel />
          <ObjectList />
        </main>
      </div>
    </div>
  );
}
